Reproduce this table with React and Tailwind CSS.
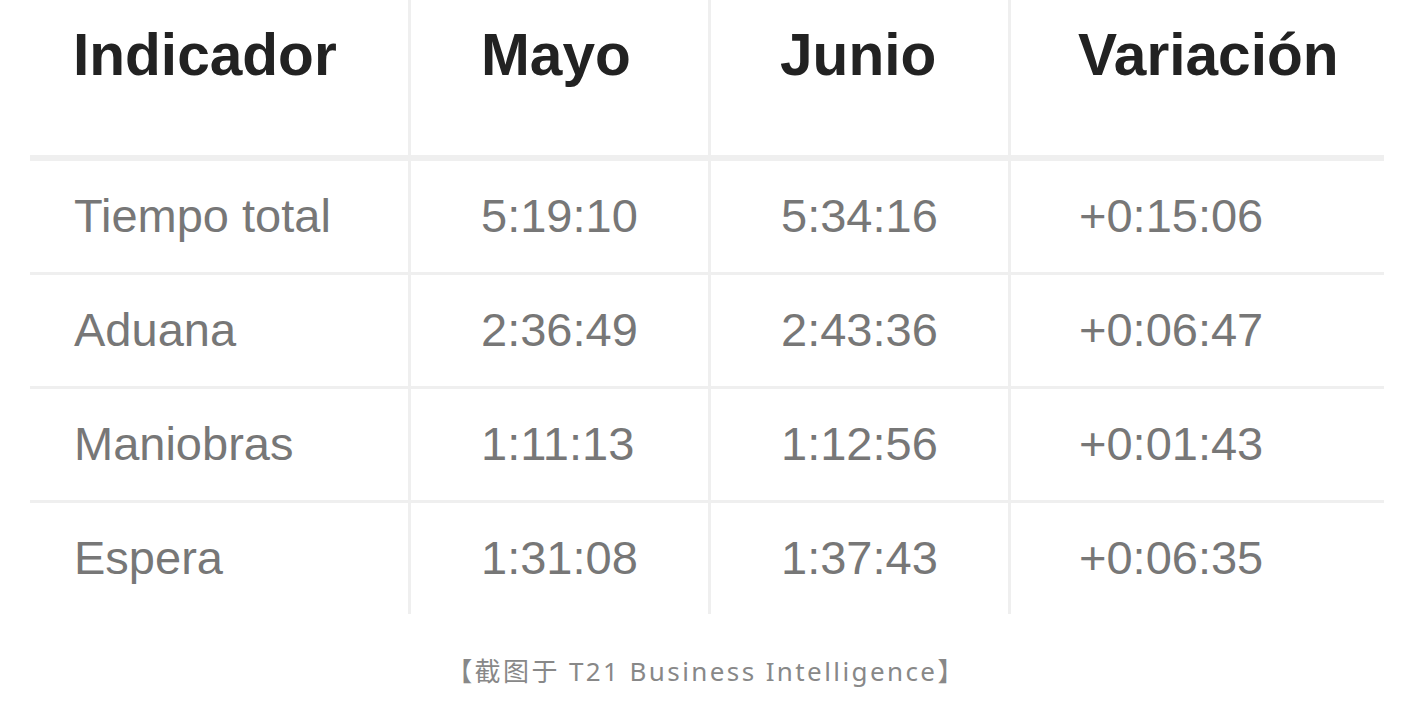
import React from "react";

const filas = [
  ["Tiempo total", "5:19:10", "5:34:16", "+0:15:06"],
  ["Aduana", "2:36:49", "2:43:36", "+0:06:47"],
  ["Maniobras", "1:11:13", "1:12:56", "+0:01:43"],
  ["Espera", "1:31:08", "1:37:43", "+0:06:35"],
];

const columnas = "grid grid-cols-[381px_300px_300px_373px]";
const padCabecera = ["pl-[43px]", "pl-[70px]", "pl-[69px]", "pl-[67px]"];
const padCelda = ["pl-[44px]", "pl-[70px]", "pl-[70px]", "pl-[68px]"];

const App = () => {
  return (
    <div className="w-[1412px] h-[702px] bg-white font-['Liberation_Sans',Arial,sans-serif]">
      <div className="pl-[30px] pr-[28px]">
        {/* Cabecera */}
        <div className={`${columnas} h-[161px] border-b-[6px] border-[#efefef]`}>
          {["Indicador", "Mayo", "Junio", "Variación"].map((t, i) => (
            <div
              key={t}
              className={`pt-[25px] text-[58.6px] leading-[59px] font-bold text-[#222222] ${padCabecera[i]} ${
                i < 3 ? "border-r-[3px] border-[#efefef]" : ""
              }`}
            >
              {t}
            </div>
          ))}
        </div>

        {/* Filas */}
        {filas.map((fila, r) => (
          <div
            key={fila[0]}
            className={`${columnas} ${
              r < filas.length - 1 ? "h-[114px] border-b-[3px] border-[#efefef]" : "h-[111px]"
            }`}
          >
            {fila.map((celda, i) => (
              <div
                key={i}
                className={`flex items-center text-[47px] text-[#777777] ${padCelda[i]} ${
                  i < 3 ? "border-r-[3px] border-[#efefef]" : ""
                }`}
              >
                {celda}
              </div>
            ))}
          </div>
        ))}
      </div>

      {/* Pie */}
      <div className="mt-[38px] text-center text-[26px] tracking-[2.4px] text-[#888888] font-['Noto_Sans','Noto_Sans_CJK_SC',sans-serif]">
        【截图于 T21 Business Intelligence】
      </div>
    </div>
  );
};

export default App;
